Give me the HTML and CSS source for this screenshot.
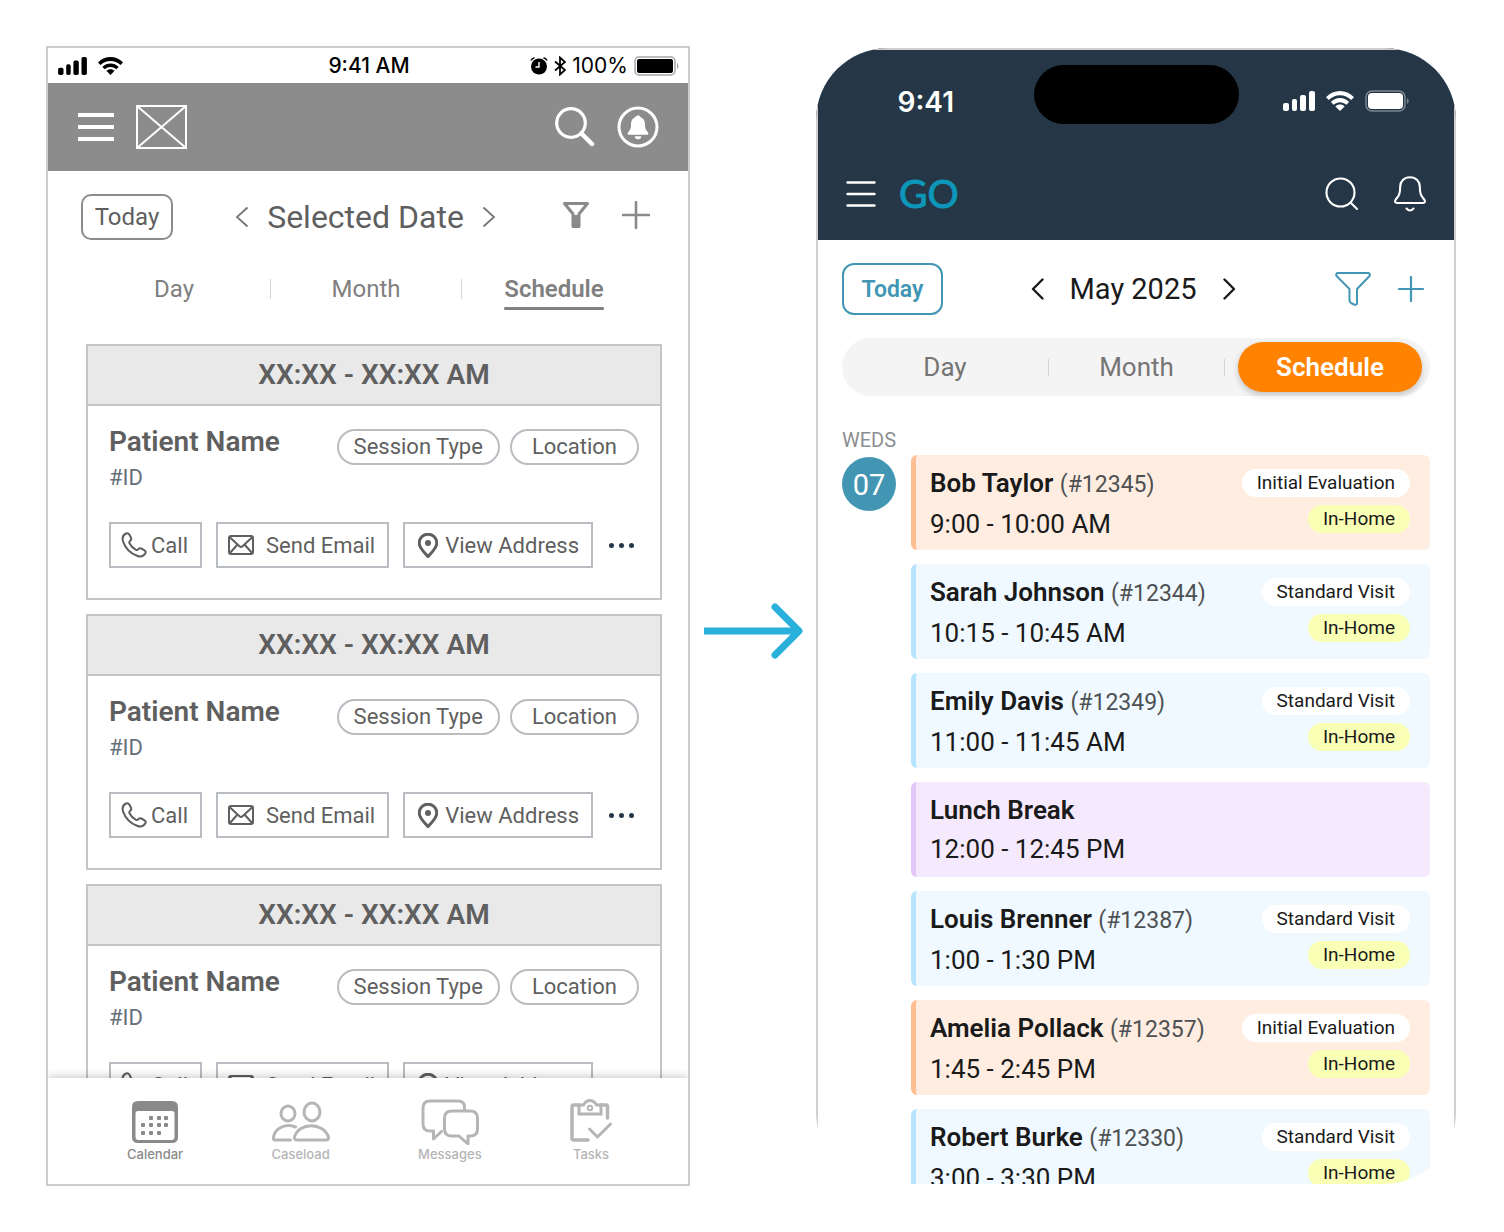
FILE: index.html
```
<!DOCTYPE html>
<html lang="en">
	<head>
		<meta charset="UTF-8" />
		<meta name="viewport" content="width=device-width, initial-scale=1.0" />
		<title>Schedule: wireframe to design</title>
		<link rel="stylesheet" href="styles.css">
	</head>
	<body>
		<!-- Icons used more than once -->
		<svg class="sprite" aria-hidden="true">
			<symbol id="icon-signal" viewBox="0 0 32 20">
				<rect x="0" y="12" width="6" height="8" rx="2" />
				<rect x="9" y="8" width="5" height="12" rx="2" />
				<rect x="17" y="4" width="6" height="16" rx="2" />
				<rect x="26" y="0" width="6" height="20" rx="2" />
			</symbol>
			<symbol id="icon-wifi" viewBox="0 0 28 20">
				<path d="M0 6.2C7.800-2 20.200-2 28 6.200L25.200 9C19 2.700 9 2.700 2.800 9Z" />
				<path d="M4.800 11C10 5.800 18 5.800 23.200 11L20.300 13.700C16.700 10.300 11.300 10.300 7.700 13.700Z" />
				<path d="M9.400 15.400C12 13 16 13 18.600 15.400L14 20Z" />
			</symbol>
			<symbol id="icon-phone" viewBox="0 0 26 26">
				<path d="M5 1.500C6.500.800 7.500 1.200 8.300 2.600L10 5.800C10.600 7.200 10.200 8 9.200 8.800C8.300 9.600 8 10.200 8.500 11.200C10 14.300 12 16.300 15 17.900C16 18.400 16.700 18 17.400 17.100C18.200 16.100 19 15.800 20.300 16.500L23.500 18.300C25 19.200 25 20.300 24.200 21.600C22.500 24.500 19.500 25.200 16 23.800C9.500 21.200 4.500 16.200 2.200 9.800C1 6.200 1.800 3 5 1.500Z" />
			</symbol>
			<symbol id="icon-mail" viewBox="0 0 26 20">
				<rect x="1" y="1" width="24" height="18" rx="2" />
				<path d="M1.500 2L11.500 11.200Q13 12.500 14.500 11.200L24.500 2M1.500 18.500L9.500 9.500M24.500 18.500L16.500 9.500" />
			</symbol>
			<symbol id="icon-pin" viewBox="0 0 20 25">
				<path d="M10 23.500C6 19.500 1.200 15 1.200 10A8.800 8.800 0 0 1 18.800 10C18.800 15 14 19.500 10 23.500Z" />
				<circle cx="10" cy="10" r="1.500" />
			</symbol>
		</svg>

		<main class="page">
			<!-- Wireframe -->
			<section class="screen wireframe" aria-label="Wireframe">
				<div class="status-bar">
					<div class="status-left">
						<svg class="status-signal" width="29" height="18"><use href="#icon-signal" /></svg>
						<svg class="status-wifi" width="25" height="18"><use href="#icon-wifi" /></svg>
					</div>
					<span class="status-time">9:41 AM</span>
					<div class="status-right">
						<svg width="18" height="18" viewBox="0 0 18 18">
							<circle cx="9" cy="9.500" r="8" />
							<path d="M1 3.500Q2 1.500 4.500.800M17 3.500Q16 1.500 13.500.800" fill="none" stroke="#000" stroke-width="1.600" />
							<path d="M9 5V10H5.500" fill="none" stroke="#fff" stroke-width="1.400" />
						</svg>
						<svg width="12" height="20" viewBox="0 0 12 20">
							<path d="M1 5.500L11 14L6 18.500V1.500L11 6L1 14.500" fill="none" stroke="#000" stroke-width="1.800" />
						</svg>
						<span class="status-percent">100%</span>
						<svg width="46" height="20" viewBox="0 0 46 20">
							<rect x="1" y="1" width="40" height="18" rx="4" fill="none" stroke="#a6a6a6" stroke-width="1.500" />
							<rect x="3" y="3" width="36" height="14" rx="2" />
							<path d="M43 6.500Q46 10 43 13.500Z" fill="#a6a6a6" />
						</svg>
					</div>
				</div>

				<header class="app-bar">
					<button class="icon-button" type="button" aria-label="Menu">
						<svg width="36" height="30" viewBox="0 0 36 30"><path d="M0 3H36M0 15H36M0 27H36" stroke="#fff" stroke-width="4" /></svg>
					</button>
					<svg class="logo-box" width="52" height="44" viewBox="0 0 52 44"><path d="M1 1H50V43H1ZM1 1L50 43M50 1L1 43" fill="none" stroke="#fff" stroke-width="2" /></svg>
					<button class="icon-button push" type="button" aria-label="Search">
						<svg width="40" height="40" viewBox="0 0 40 40"><g fill="none" stroke="#fff" stroke-linecap="round"><circle cx="16" cy="16" r="14.300" stroke-width="3.200" /><path d="M26.500 26.500L37 37" stroke-width="4.500" /></g></svg>
					</button>
					<button class="icon-button" type="button" aria-label="Notifications">
						<svg width="42" height="42" viewBox="0 0 42 42">
							<circle cx="21" cy="21" r="19" fill="none" stroke="#fff" stroke-width="3" />
							<path d="M21 9.500C22.500 9.500 23.300 10.300 23.600 11.300C27 12.600 28 15.500 28 19C28 23 29 24 31 26.500C31.700 27.700 31.300 28.800 30 28.800H12C10.700 28.800 10.300 27.700 11 26.500C13 24 14 23 14 19C14 15.500 15 12.600 18.400 11.300C18.700 10.300 19.500 9.500 21 9.500ZM17.800 30.300H24.200A3.200 3 0 0 1 17.800 30.300Z" fill="#fff" />
						</svg>
					</button>
				</header>

				<div class="toolbar">
					<button class="today" type="button">Today</button>
					<div class="date-picker">
						<button class="icon-button" type="button" aria-label="Previous">
							<svg width="14" height="22" viewBox="0 0 14 22"><path d="M12.500 1.500L2 11L12.500 20.500" fill="none" stroke="#757575" stroke-width="1.800" /></svg>
						</button>
						<h1 class="date">Selected Date</h1>
						<button class="icon-button" type="button" aria-label="Next">
							<svg width="14" height="22" viewBox="0 0 14 22"><path d="M1.500 1.500L12 11L1.500 20.500" fill="none" stroke="#757575" stroke-width="1.800" /></svg>
						</button>
					</div>
					<div class="tools">
						<button class="icon-button" type="button" aria-label="Filter">
							<svg width="28" height="28" viewBox="0 0 28 28"><path d="M2.500 2.500H25.500L17 13V25.500H11V13Z" fill="none" stroke="#8a8a8a" stroke-width="3" stroke-linejoin="round" /><path d="M11 14H17V25.500H11Z" fill="#8a8a8a" /></svg>
						</button>
						<button class="icon-button" type="button" aria-label="Add">
							<svg width="28" height="28" viewBox="0 0 28 28"><path d="M14 1V27M1 14H27" stroke="#8a8a8a" stroke-width="2.600" stroke-linecap="round" /></svg>
						</button>
					</div>
				</div>

				<div class="tabs">
					<button class="tab" type="button">Day</button>
					<span class="divider"></span>
					<button class="tab" type="button">Month</button>
					<span class="divider"></span>
					<button class="tab active" type="button">Schedule</button>
				</div>

				<div class="cards">
					<article class="card">
						<h2 class="card-time">XX:XX - XX:XX AM</h2>
						<div class="card-body">
							<div class="card-top">
								<div>
									<h3 class="patient">Patient Name</h3>
									<p class="patient-id">#ID</p>
								</div>
								<div class="pills">
									<span class="pill">Session Type</span>
									<span class="pill wide">Location</span>
								</div>
							</div>
							<div class="actions">
								<button class="action" type="button"><svg width="26" height="26"><use href="#icon-phone" /></svg>Call</button>
								<button class="action email" type="button"><svg width="26" height="20"><use href="#icon-mail" /></svg>Send Email</button>
								<button class="action address" type="button"><svg width="20" height="25"><use href="#icon-pin" /></svg>View Address</button>
								<button class="more" type="button" aria-label="More"><i></i><i></i><i></i></button>
							</div>
						</div>
					</article>

					<article class="card">
						<h2 class="card-time">XX:XX - XX:XX AM</h2>
						<div class="card-body">
							<div class="card-top">
								<div>
									<h3 class="patient">Patient Name</h3>
									<p class="patient-id">#ID</p>
								</div>
								<div class="pills">
									<span class="pill">Session Type</span>
									<span class="pill wide">Location</span>
								</div>
							</div>
							<div class="actions">
								<button class="action" type="button"><svg width="26" height="26"><use href="#icon-phone" /></svg>Call</button>
								<button class="action email" type="button"><svg width="26" height="20"><use href="#icon-mail" /></svg>Send Email</button>
								<button class="action address" type="button"><svg width="20" height="25"><use href="#icon-pin" /></svg>View Address</button>
								<button class="more" type="button" aria-label="More"><i></i><i></i><i></i></button>
							</div>
						</div>
					</article>

					<article class="card">
						<h2 class="card-time">XX:XX - XX:XX AM</h2>
						<div class="card-body">
							<div class="card-top">
								<div>
									<h3 class="patient">Patient Name</h3>
									<p class="patient-id">#ID</p>
								</div>
								<div class="pills">
									<span class="pill">Session Type</span>
									<span class="pill wide">Location</span>
								</div>
							</div>
							<div class="actions">
								<button class="action" type="button"><svg width="26" height="26"><use href="#icon-phone" /></svg>Call</button>
								<button class="action email" type="button"><svg width="26" height="20"><use href="#icon-mail" /></svg>Send Email</button>
								<button class="action address" type="button"><svg width="20" height="25"><use href="#icon-pin" /></svg>View Address</button>
								<button class="more" type="button" aria-label="More"><i></i><i></i><i></i></button>
							</div>
						</div>
					</article>
				</div>

				<nav class="bottom-nav">
					<a class="nav-item current" href="#calendar">
						<svg width="46" height="46" viewBox="0 0 46 46">
							<path fill-rule="evenodd" d="M6 2H40Q46 2 46 8V38Q46 44 40 44H6Q0 44 0 38V8Q0 2 6 2ZM6 12Q3.500 12 3.500 14.500V38Q3.500 41 6.500 41H39.500Q42.500 41 42.500 38V14.500Q42.500 12 40 12Z" fill="#8a8a8a" />
							<g fill="#8a8a8a">
								<rect x="17" y="17" width="4" height="4" rx="1" /><rect x="25" y="17" width="4" height="4" rx="1" /><rect x="32" y="17" width="4" height="4" rx="1" />
								<rect x="9" y="24" width="4" height="4" rx="1" /><rect x="17" y="24" width="4" height="4" rx="1" /><rect x="25" y="24" width="4" height="4" rx="1" /><rect x="32" y="24" width="4" height="4" rx="1" />
								<rect x="9" y="32" width="4" height="4" rx="1" /><rect x="17" y="32" width="4" height="4" rx="1" /><rect x="25" y="32" width="4" height="4" rx="1" />
							</g>
						</svg>
						Calendar
					</a>
					<a class="nav-item" href="#caseload">
						<svg width="58" height="46" viewBox="0 0 58 46">
							<g fill="none" stroke="#b5b5b5" stroke-width="3" stroke-linecap="round" stroke-linejoin="round">
								<ellipse cx="16" cy="14.500" rx="7" ry="7.500" />
								<ellipse cx="40" cy="13" rx="8" ry="9" />
								<path d="M23.500 28C14 24 3 29 1.500 38Q1 41 3 41H18.500" />
								<path d="M25 41Q22 41 22.500 38C27 23 51 23 56.500 38Q57 41 54 41Z" />
							</g>
						</svg>
						Caseload
					</a>
					<a class="nav-item" href="#messages">
						<svg width="58" height="46" viewBox="0 0 58 46">
							<g fill="none" stroke="#b5b5b5" stroke-width="3" stroke-linejoin="round">
								<path d="M43.500 11V8Q43.500 2 37 2H9Q2 2 2 9V25Q2 32 9 32H12.500V40L21.500 31.500" />
								<path d="M31 12H49Q56.500 12 56.500 19V30Q56.500 37 49 37H47V45L38 37H31Q23.500 37 23.500 30V19Q23.500 12 31 12Z" />
							</g>
						</svg>
						Messages
					</a>
					<a class="nav-item" href="#tasks">
						<svg width="42" height="46" viewBox="0 0 42 46">
							<g fill="none" stroke="#b5b5b5" stroke-width="3.500" stroke-linecap="round">
								<path d="M9 6H4Q2 6 2 8V39Q2 41 4 41H18M30 6H36Q37.500 6 37.500 8V19" />
								<path d="M9 6V15H31V6H26.500Q24 1.500 20 1.500T13.500 6Z" stroke-width="3" />
								<circle cx="20" cy="9" r="2.200" stroke-width="2" />
								<path d="M19.500 30L27.500 38L40.500 25" stroke-width="3" />
							</g>
						</svg>
						Tasks
					</a>
				</nav>
			</section>

			<svg class="arrow" viewBox="0 0 100 56" aria-hidden="true">
				<path d="M1 28H94" stroke-width="7" />
				<path d="M72 4L96 28L72 52" stroke-width="7" stroke-linecap="round" stroke-linejoin="round" />
			</svg>

			<!-- Final design -->
			<section class="screen phone" aria-label="Final design">
				<header class="phone-header">
					<div class="phone-status">
						<span class="phone-time">9:41</span>
						<div class="island"></div>
						<div class="phone-icons">
							<svg width="32" height="20"><use href="#icon-signal" /></svg>
							<svg width="28" height="20"><use href="#icon-wifi" /></svg>
							<svg width="45" height="22" viewBox="0 0 45 22">
								<rect x="1" y="1" width="39" height="20" rx="6" fill="none" stroke="#7c8790" stroke-width="1.500" />
								<rect x="3" y="3" width="35" height="16" rx="4" />
								<path d="M42 8Q45.500 11 42 14Z" fill="#7c8790" />
							</svg>
						</div>
					</div>
					<div class="phone-bar">
						<button class="icon-button" type="button" aria-label="Menu">
							<svg width="30" height="28" viewBox="0 0 30 28"><path d="M1.500 2.500H28.500M1.500 14H28.500M1.500 25.500H28.500" stroke="#fff" stroke-width="2.400" stroke-linecap="round" /></svg>
						</button>
						<span class="logo">GO</span>
						<button class="icon-button push" type="button" aria-label="Search">
							<svg width="34" height="34" viewBox="0 0 34 34"><path d="M29.500 15.500A14 14 0 1 1 1.500 15.500A14 14 0 0 1 29.500 15.500ZM25.500 25.500L32 32" fill="none" stroke="#fff" stroke-width="2.100" stroke-linecap="round" /></svg>
						</button>
						<button class="icon-button" type="button" aria-label="Notifications">
							<svg width="32" height="36" viewBox="0 0 32 36"><path d="M16 1.200C10 1.200 6.200 5.500 6.200 10.500C6.200 18 5 19.500 1.800 23.500C.500 25.500 1 27 3 27H29C31 27 31.500 25.500 30.200 23.500C27 19.500 25.800 18 25.800 10.500C25.800 5.500 22 1.200 16 1.200ZM12.500 32.500Q16 36.500 19.500 32.500" fill="none" stroke="#fff" stroke-width="2.100" stroke-linecap="round" stroke-linejoin="round" /></svg>
						</button>
					</div>
				</header>

				<div class="phone-body">
					<div class="phone-toolbar">
						<button class="phone-today" type="button">Today</button>
						<div class="phone-date-picker">
							<button class="icon-button" type="button" aria-label="Previous">
								<svg width="13" height="22" viewBox="0 0 13 22"><path d="M11.500 1.500L2 11L11.500 20.500" fill="none" stroke="#1a1a1a" stroke-width="2.400" stroke-linecap="round" stroke-linejoin="round" /></svg>
							</button>
							<h1 class="phone-date">May 2025</h1>
							<button class="icon-button" type="button" aria-label="Next">
								<svg width="13" height="22" viewBox="0 0 13 22"><path d="M1.500 1.500L11 11L1.500 20.500" fill="none" stroke="#1a1a1a" stroke-width="2.400" stroke-linecap="round" stroke-linejoin="round" /></svg>
							</button>
						</div>
						<div class="phone-tools">
							<button class="icon-button" type="button" aria-label="Filter">
								<svg width="36" height="34" viewBox="0 0 36 34"><path d="M2.500 1H33.500Q35.500 2 34.500 4L22 17V31Q22 33.500 19 32.500L16 31Q14.500 30 14.500 28.500V17L1.500 4Q.500 2 2.500 1Z" fill="none" stroke="#4296b4" stroke-width="2" stroke-linejoin="round" /></svg>
							</button>
							<button class="icon-button" type="button" aria-label="Add">
								<svg width="26" height="26" viewBox="0 0 26 26"><path d="M13 1V25M1 13H25" stroke="#4296b4" stroke-width="2.200" stroke-linecap="round" /></svg>
							</button>
						</div>
					</div>

					<div class="segments">
						<button class="segment" type="button">Day</button>
						<span class="divider"></span>
						<button class="segment" type="button">Month</button>
						<span class="divider"></span>
						<button class="segment selected" type="button">Schedule</button>
					</div>

					<div class="agenda">
						<div class="day">
							<span class="weekday">WEDS</span>
							<span class="day-number">07</span>
						</div>
						<ul class="visits">
							<li class="visit initial">
								<div>
									<p class="visit-name">Bob Taylor <span>(#12345)</span></p>
									<p class="visit-time">9:00 - 10:00 AM</p>
								</div>
								<div class="tags"><span class="tag">Initial Evaluation</span><span class="tag home">In-Home</span></div>
							</li>
							<li class="visit">
								<div>
									<p class="visit-name">Sarah Johnson <span>(#12344)</span></p>
									<p class="visit-time">10:15 - 10:45 AM</p>
								</div>
								<div class="tags"><span class="tag">Standard Visit</span><span class="tag home">In-Home</span></div>
							</li>
							<li class="visit">
								<div>
									<p class="visit-name">Emily Davis <span>(#12349)</span></p>
									<p class="visit-time">11:00 - 11:45 AM</p>
								</div>
								<div class="tags"><span class="tag">Standard Visit</span><span class="tag home">In-Home</span></div>
							</li>
							<li class="visit break">
								<div>
									<p class="visit-name">Lunch Break</p>
									<p class="visit-time">12:00 - 12:45 PM</p>
								</div>
							</li>
							<li class="visit">
								<div>
									<p class="visit-name">Louis Brenner <span>(#12387)</span></p>
									<p class="visit-time">1:00 - 1:30 PM</p>
								</div>
								<div class="tags"><span class="tag">Standard Visit</span><span class="tag home">In-Home</span></div>
							</li>
							<li class="visit initial">
								<div>
									<p class="visit-name">Amelia Pollack <span>(#12357)</span></p>
									<p class="visit-time">1:45 - 2:45 PM</p>
								</div>
								<div class="tags"><span class="tag">Initial Evaluation</span><span class="tag home">In-Home</span></div>
							</li>
							<li class="visit">
								<div>
									<p class="visit-name">Robert Burke <span>(#12330)</span></p>
									<p class="visit-time">3:00 - 3:30 PM</p>
								</div>
								<div class="tags"><span class="tag">Standard Visit</span><span class="tag home">In-Home</span></div>
							</li>
						</ul>
					</div>
				</div>
			</section>
		</main>
	</body>
</html>
```
FILE: styles.css
```
* {
	box-sizing: border-box;
}
body {
	margin: 0;
	background-color: #fff;
	font-family: Roboto, "Liberation Sans", sans-serif;
	color: #5f5f5f;
}
h1,
h2,
h3,
p,
ul {
	margin: 0;
	padding: 0;
}
button {
	padding: 0;
	border: none;
	background: none;
	font-family: inherit;
	color: inherit;
	white-space: nowrap;
	cursor: pointer;
}
svg {
	display: block;
	flex-shrink: 0;
}
.sprite {
	position: absolute;
	width: 0;
	height: 0;
}
.icon-button {
	display: block;
}
.push {
	margin-left: auto;
}
.page {
	display: grid;
	grid-template-columns: 644fr 100px 640fr;
	grid-template-rows: minmax(0, 1fr);
	gap: 13px;
	height: 100vh;
	padding: 46px 48px 46px 46px;
}
.screen {
	display: flex;
	flex-direction: column;
	overflow: hidden;
}
.arrow {
	align-self: center;
	width: 100%;
	margin-top: 30px;
	fill: none;
	stroke: #29b1dc;
}
.divider {
	width: 1px;
	background-color: #d5d5d5;
}

/* Wireframe */
.wireframe {
	border: 2px solid #cdcdcd;
}
.status-bar {
	display: grid;
	grid-template-columns: 1fr auto 1fr;
	align-items: center;
	height: 35px;
	padding: 0 8px 0 10px;
	font-family: Inter, "Liberation Sans", sans-serif;
	color: #000;
}
.status-left {
	display: flex;
	gap: 11px;
}
.status-time {
	font-size: 21px;
	font-weight: 500;
}
.status-right {
	display: flex;
	justify-content: flex-end;
	align-items: center;
	gap: 6px;
}
.status-percent {
	font-size: 21px;
}
.app-bar {
	display: flex;
	align-items: center;
	gap: 22px;
	height: 88px;
	padding: 0 29px 0 30px;
	background-color: #8c8c8c;
}
.toolbar {
	display: grid;
	grid-template-columns: 1fr auto 1fr;
	align-items: center;
	padding: 23px 38px 0 33px;
}
.today {
	justify-self: start;
	width: 92px;
	height: 46px;
	border: 2px solid #8c8c8c;
	border-radius: 10px;
	font-size: 24px;
}
.date-picker {
	display: flex;
	align-items: center;
	gap: 18px;
}
.date {
	font-size: 32px;
	line-height: 46px;
	font-weight: 400;
}
.tools {
	display: flex;
	justify-content: flex-end;
	gap: 32px;
	padding-bottom: 4px;
}
.tabs {
	display: grid;
	grid-template-columns: 192fr 1px 190fr 1px 184fr;
	align-items: center;
	padding: 28px 42px 0 30px;
}
.tabs .divider {
	height: 20px;
}
.tab {
	height: 42px;
	font-size: 24px;
	color: #808080;
}
.tab.active {
	font-weight: 600;
	text-decoration: underline;
	text-decoration-thickness: 3px;
	text-underline-offset: 10px;
	text-decoration-skip-ink: none;
}
.cards {
	flex: 1;
	min-height: 0;
	overflow: hidden;
	padding: 34px 26px 0 38px;
}
.card {
	margin-bottom: 14px;
	border: 2px solid #c4c5c7;
}
.card-time {
	border-bottom: 2px solid #c4c5c7;
	background-color: #e9e9e9;
	font-size: 28px;
	line-height: 58px;
	font-weight: 600;
	text-align: center;
}
.card-body {
	padding: 18px 21px 30px;
}
.card-top {
	display: flex;
	justify-content: space-between;
	align-items: flex-start;
}
.patient {
	font-size: 28px;
	line-height: 36px;
	font-weight: 600;
}
.patient-id {
	font-size: 22px;
	line-height: 36px;
	color: #66707a;
}
.pills {
	display: flex;
	gap: 10px;
	padding-top: 5px;
}
.pill {
	padding: 0 15px;
	border: 2px solid #b9bdc1;
	border-radius: 18px;
	font-size: 22px;
	line-height: 32px;
}
.pill.wide {
	padding: 0 20px;
}
.actions {
	display: flex;
	align-items: center;
	gap: 14px;
	margin-top: 26px;
}
.action {
	display: flex;
	align-items: center;
	gap: 4px;
	height: 46px;
	padding: 0 12px 0 10px;
	border: 2px solid #b9bdc1;
	font-size: 22px;
}
.action svg {
	fill: none;
	stroke: #5f5f5f;
	stroke-width: 2px;
}
.action.email {
	gap: 12px;
}
.action.address {
	gap: 7px;
	padding-left: 13px;
}
.action.address svg {
	stroke-width: 3px;
}
.more {
	display: flex;
	gap: 5px;
	margin-left: 2px;
}
.more i {
	width: 5px;
	height: 5px;
	border-radius: 50%;
	background-color: #253746;
}
.bottom-nav {
	display: flex;
	justify-content: space-between;
	align-items: flex-start;
	z-index: 1;
	height: 106px;
	padding: 21px 76px 0 79px;
	background-color: #fff;
	box-shadow: 0 -2px 8px rgba(0, 0, 0, 0.2);
}
.nav-item {
	display: flex;
	flex-direction: column;
	align-items: center;
	font-family: Inter, "Liberation Sans", sans-serif;
	font-size: 13px;
	line-height: 18px;
	font-weight: 500;
	text-decoration: none;
	color: #b5b5b5;
}
.nav-item.current {
	color: #8a8a8a;
}

/* Final design */
.phone {
	margin: 2px 0;
	border-radius: 72px;
	color: #1a1a1a;
}
.phone-header {
	height: 192px;
	border: 2px solid #cfcfcf;
	border-bottom: none;
	background-color: #253746;
	color: #fff;
	flex-shrink: 0;
}
.phone-status {
	display: grid;
	grid-template-columns: 1fr auto 1fr;
	align-items: center;
	justify-items: center;
	padding-top: 15px;
}
.phone-time {
	padding-top: 14px;
	font-family: Inter, "Liberation Sans", sans-serif;
	font-size: 28px;
	font-weight: 600;
}
.island {
	width: 205px;
	height: 59px;
	border-radius: 30px;
	background-color: #000;
}
.phone-icons {
	display: flex;
	align-items: center;
	gap: 11px;
	padding-top: 12px;
	fill: #fff;
}
.phone-bar {
	display: flex;
	align-items: center;
	height: 60px;
	margin-top: 40px;
	padding: 0 28px;
}
.logo {
	margin-left: 23px;
	padding-bottom: 2px;
	font-family: Lato, sans-serif;
	font-size: 39px;
	color: #0d96b9;
	-webkit-text-stroke: 1px #0d96b9;
}
.phone-bar .push {
	margin-right: 35px;
}
.phone-body {
	flex: 1;
	min-height: 0;
	padding: 23px 24px 0;
	border: 2px solid #cfcfcf;
	border-width: 0 2px;
}
.phone-toolbar {
	display: grid;
	grid-template-columns: 1fr auto 1fr;
	align-items: center;
	padding-right: 6px;
}
.phone-today {
	justify-self: start;
	width: 101px;
	height: 52px;
	border: 2px solid #4296b4;
	border-radius: 12px;
	font-size: 23px;
	font-weight: 600;
	color: #4296b4;
}
.phone-date-picker {
	display: flex;
	align-items: center;
	gap: 26px;
}
.phone-date {
	font-size: 29px;
	font-weight: 400;
}
.phone-tools {
	display: flex;
	justify-content: flex-end;
	align-items: center;
	gap: 27px;
}
.segments {
	display: grid;
	grid-template-columns: 206fr 1px 175fr 1px 197fr;
	align-items: center;
	height: 58px;
	margin-top: 23px;
	padding-right: 8px;
	border-radius: 29px;
	background-color: #f4f4f4;
}
.segments .divider {
	height: 17px;
}
.segment {
	font-size: 26px;
	color: #757575;
}
.segment.selected {
	height: 50px;
	margin-left: 13px;
	border-radius: 25px;
	background-color: #ff8200;
	box-shadow: 0 3px 6px rgba(0, 0, 0, 0.2);
	font-weight: 600;
	color: #fff;
}
.agenda {
	display: grid;
	grid-template-columns: 54px 1fr;
	gap: 15px;
	padding-top: 34px;
}
.day {
	display: flex;
	flex-direction: column;
	align-items: center;
	gap: 7px;
}
.weekday {
	font-size: 20px;
	line-height: 20px;
	color: #8c8f91;
}
.day-number {
	width: 54px;
	padding-top: 2px;
	border-radius: 50%;
	background-color: #4296b4;
	font-size: 29px;
	line-height: 52px;
	text-align: center;
	color: #fff;
}
.visits {
	padding-top: 25px;
	list-style: none;
}
.visit {
	display: flex;
	justify-content: space-between;
	height: 95px;
	margin-bottom: 14px;
	padding: 8px 20px 0 14px;
	border-left: 5px solid #b8e4ff;
	border-radius: 6px;
	background-color: #f0f9ff;
}
.visit.initial {
	border-color: #ffbf94;
	background-color: #ffede1;
}
.visit.break {
	border-color: #e3c6fa;
	background-color: #f5e9fd;
}
.visit-name {
	font-size: 26px;
	line-height: 40px;
	font-weight: 600;
}
.visit-name span {
	font-size: 23px;
	font-weight: 400;
	color: #4e5153;
}
.visit-time {
	font-size: 26px;
	line-height: 38px;
}
.tags {
	display: flex;
	flex-direction: column;
	align-items: flex-end;
	gap: 8px;
	padding-top: 6px;
}
.tag {
	padding: 0 15px;
	border-radius: 14px;
	background-color: #fff;
	font-size: 19px;
	line-height: 28px;
}
.tag.home {
	background-color: #f9ffb5;
}
```
